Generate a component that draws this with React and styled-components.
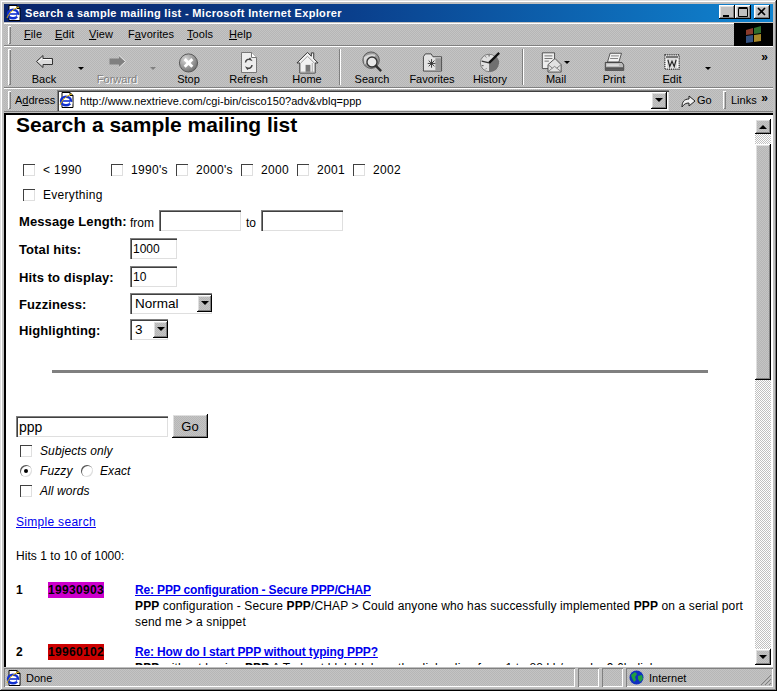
import React from 'react';
import styled, { createGlobalStyle } from 'styled-components';

const Global = createGlobalStyle`
  html, body { margin: 0; padding: 0; background: #c0c0c0; }
  * { box-sizing: border-box; }
`;

const dither = `repeating-conic-gradient(#c4c4c4 0 25%, #b6b6b6 0 50%) 0 0 / 2px 2px`;
const raised = `inset -1px -1px 0 #000, inset 1px 1px 0 #fff, inset -2px -2px 0 #808080, inset 2px 2px 0 #dfdfdf`;
const sunken = `inset 1px 1px 0 #808080, inset 2px 2px 0 #404040, inset -1px -1px 0 #dfdfdf`;

const Win = styled.div`
  width: 777px;
  height: 691px;
  padding: 4px;
  display: flex;
  flex-direction: column;
  overflow: hidden;
  background: #c0c0c0;
  box-shadow: inset -1px -1px 0 #000, inset 1px 1px 0 #dfdfdf, inset -2px -2px 0 #808080, inset 2px 2px 0 #fff;
  font-family: "Liberation Sans", Arial, sans-serif;
  font-size: 12px;
  color: #000;
`;
const TitleBar = styled.div`
  height: 18px;
  flex: none;
  display: flex;
  align-items: center;
  padding: 0 3px 0 2px;
  margin-bottom: 1px;
  background: linear-gradient(90deg, #0a246a 0%, #0a3f8c 45%, #1084d0 100%);
  color: #fff;
  font-weight: bold;
  font-size: 11px;
  letter-spacing: 0.33px;
  gap: 3px;
`;
const TitleText = styled.span`
  flex: 1;
  margin-left: 1px;
  white-space: nowrap;
`;
const WinBtn = styled.div`
  width: 16px;
  height: 14px;
  margin-top: -2px;
  margin-left: ${p => p.$gap || 0}px;
  display: flex;
  align-items: center;
  justify-content: center;
  background: #c0c0c0;
  box-shadow: ${raised};
`;
const Band = styled.div`
  flex: none;
  height: ${p => p.$h}px;
  display: flex;
  align-items: center;
  position: relative;
  font-size: 11px;
  background: ${dither};
  box-shadow: inset 0 1px 0 #fff, inset 0 -1px 0 #808080;
`;
const Grip = styled.div`
  width: 3px;
  height: ${p => p.$h}px;
  flex: none;
  margin-left: ${p => p.$ml ?? 4}px;
  margin-right: ${p => p.$mr || 0}px;
  background: #c0c0c0;
  box-shadow: inset 1px 1px 0 #fff, inset -1px -1px 0 #808080;
`;
const MenuItem = styled.span`
  width: ${p => p.$w}px;
  flex: none;
  margin-top: -2px;
  margin-left: ${p => p.$ml || 0}px;
  white-space: nowrap;
  letter-spacing: 0.1px;
  u { text-decoration: underline; }
`;
const Flag = styled.div`
  width: 39px;
  height: 23px;
  margin-left: auto;
  background: #000;
  display: flex;
  align-items: center;
  justify-content: center;
`;
const ToolBtn = styled.div`
  width: ${p => p.$w}px;
  height: 41px;
  flex: none;
  position: relative;
  display: flex;
  flex-direction: column;
  align-items: center;
  padding-top: 3px;
  svg { height: 24px; flex: none; margin-right: ${p => (p.$dd ? 10 : 0)}px; }
  span {
    margin-top: -2px;
    line-height: 14px;
    color: ${p => (p.$off ? '#808080' : '#000')};
    text-shadow: ${p => (p.$off ? '1px 1px 0 #fff' : 'none')};
  }
  ${p => p.$dd && `
    &::after {
      content: '';
      position: absolute;
      left: 33px;
      top: 14px;
      border: 3px solid transparent;
      border-bottom: 0;
      border-top: 3px solid #000;
    }
  `}
`;
const Drop = styled.div`
  width: ${p => p.$w}px;
  flex: none;
  display: flex;
  justify-content: center;
  margin-top: 2px;
  &::before {
    content: '';
    border: 3px solid transparent;
    border-bottom: 0;
    border-top: 3px solid ${p => (p.$off ? '#808080' : '#000')};
    width: 0;
    height: 0;
  }
`;
const Spacer = styled.div`
  width: ${p => p.$w}px;
  flex: none;
`;
const Sep = styled.div`
  width: 2px;
  height: 36px;
  flex: none;
  margin: 0 ${p => p.$m}px;
  background: linear-gradient(90deg, #808080 50%, #fff 50%);
`;
const Chevrons = styled.span`
  position: absolute;
  right: 5px;
  top: ${p => p.$top}px;
  font-size: 12px;
  font-weight: bold;
  line-height: 10px;
`;
const AddrLabel = styled.span`
  margin-left: 4px;
  width: 42px;
  flex: none;
`;
const AddrField = styled.div`
  width: 612px;
  height: 21px;
  flex: none;
  display: flex;
  align-items: center;
  padding: 0 2px;
  background: #fff;
  box-shadow: ${sunken};
  svg { flex: none; margin-right: 6px; }
`;
const AddrUrl = styled.span`
  flex: 1;
  padding-top: 1px;
  letter-spacing: 0.02px;
`;
const ArrowBtn = styled.div`
  width: ${p => p.$w || 16}px;
  height: ${p => p.$h || 17}px;
  flex: none;
  display: flex;
  align-items: center;
  justify-content: center;
  background: ${dither};
  box-shadow: ${raised};
  &::before {
    content: '';
    width: 0;
    height: 0;
    border: 4px solid transparent;
    border-bottom: 0;
    border-top: 4px solid #000;
    ${p => p.$up && 'transform: rotate(180deg);'}
  }
`;
const GoWrap = styled.div`
  width: 54px;
  flex: none;
  display: flex;
  align-items: center;
  padding-left: 11px;
  gap: 1px;
`;
const LinksLabel = styled.span`
  margin-left: 5px;
`;
const Frame = styled.div`
  flex: 1;
  min-height: 0;
  display: flex;
  margin-top: 1px;
  background: #fff;
  box-shadow: inset 2px 2px 0 #000, inset 1px 1px 0 #808080;
  padding: 3px 2px 2px 2px;
`;
const Page = styled.div`
  flex: 1;
  min-width: 0;
  overflow: hidden;
  padding-left: 10px;
`;
const Heading = styled.h1`
  margin: -3px 0 0;
  height: 44px;
  font-size: 21px;
  line-height: 24px;
  font-weight: bold;
`;
const CheckRow = styled.div`
  height: ${p => p.$h || 25}px;
  display: flex;
  align-items: center;
  padding-left: ${p => p.$pl ?? 7}px;
`;
const CheckItem = styled.label`
  width: ${p => p.$w || 'auto'};
  flex: none;
  display: flex;
  align-items: center;
  gap: ${p => p.$gap || 8}px;
  font-style: ${p => (p.$em ? 'italic' : 'normal')};
  letter-spacing: ${p => (p.$em ? '0.1px' : '0.3px')};
`;
const Box = styled.span`
  width: 12px;
  height: 12px;
  flex: none;
  background: #fff;
  box-shadow: inset 1px 1px 0 #404040, inset -1px -1px 0 #dfdfdf;
`;
const Radio = styled.span`
  width: 12px;
  height: 12px;
  flex: none;
  border-radius: 50%;
  background: #fff;
  display: flex;
  align-items: center;
  justify-content: center;
  box-shadow: inset 1px 1px 0 #555, inset -1px -1px 0 #dfdfdf;
  &::after {
    content: '';
    width: 4px;
    height: 4px;
    border-radius: 50%;
    background: ${p => (p.$on ? '#000' : 'transparent')};
  }
`;
const FormRow = styled.div`
  height: ${p => p.$h || 28}px;
  display: flex;
  align-items: center;
  padding-left: 3px;
  input, & > div { margin-top: -2px; }
`;
const Label = styled.b`
  width: 111px;
  flex: none;
  font-size: 13px;
  letter-spacing: 0.1px;
`;
const Unit = styled.span`
  padding-top: 3px;
`;
const Field = styled.input`
  width: ${p => p.$w}px;
  height: 21px;
  flex: none;
  margin: ${p => p.$m || 0};
  padding: 1px 2px 0 3px;
  border: 0;
  outline: 0;
  background: #fff;
  font: inherit;
  font-size: ${p => p.$fs || 12}px;
  color: #000;
  box-shadow: ${sunken};
`;
const Select = styled.div`
  width: ${p => p.$w}px;
  height: 21px;
  flex: none;
  display: flex;
  align-items: center;
  justify-content: space-between;
  padding: 0 0 0 5px;
  font-size: 13.5px;
  box-shadow: ${sunken};
`;
const Rule = styled.hr`
  width: 656px;
  height: 3px;
  margin: 27px 0 41px 36px;
  border: 0;
  background: #808080;
`;
const SearchRow = styled.div`
  height: 24px;
  display: flex;
  align-items: center;
  gap: 4px;
`;
const GoBtn = styled.button`
  width: 36px;
  height: 24px;
  padding: 0;
  border: 0;
  background: ${dither};
  box-shadow: ${raised};
  font: inherit;
  font-size: 13px;
  color: #000;
`;
const Options = styled.div`
  margin-top: 3px;
`;
const LinkA = styled.a`
  color: #0000ee;
  text-decoration: underline;
`;
const SimpleLine = styled.div`
  margin-top: 14px;
  height: 14px;
  line-height: 14px;
  letter-spacing: 0.3px;
`;
const HitsLine = styled.div`
  margin-top: 20px;
  height: 14px;
  line-height: 14px;
  letter-spacing: 0.05px;
`;
const Result = styled.div`
  display: grid;
  grid-template-columns: 32px 87px 1fr;
  margin-top: ${p => p.$mt}px;
`;
const Num = styled.b`
  line-height: 16px;
`;
const Chip = styled.b`
  width: 56px;
  height: 16px;
  text-align: center;
  line-height: 16px;
  letter-spacing: 0.3px;
  background: ${p => p.$bg};
`;
const ResLink = styled(LinkA)`
  display: block;
  font-weight: bold;
  line-height: 15px;
  padding-top: 1px;
  letter-spacing: -0.15px;
`;
const Snip = styled.div`
  line-height: 16px;
  padding-right: 3px;
  letter-spacing: 0.13px;
`;
const ScrollBar = styled.div`
  width: 16px;
  flex: none;
  margin-top: 3px;
  display: flex;
  flex-direction: column;
  background: repeating-conic-gradient(#fff 0 25%, #c0c0c0 0 50%) 0 0 / 2px 2px;
`;
const Thumb = styled.div`
  height: 236px;
  flex: none;
  margin-top: 10px;
  margin-bottom: auto;
  background: ${dither};
  box-shadow: ${raised};
`;
const Status = styled.div`
  flex: none;
  height: 19px;
  margin-top: 1px;
  display: flex;
  gap: 3px;
  font-size: 11px;
`;
const Cell = styled.div`
  width: ${p => (p.$w ? `${p.$w}px` : 'auto')};
  flex: ${p => (p.$w ? 'none' : '1')};
  display: flex;
  align-items: center;
  gap: ${p => p.$gap || 5}px;
  padding-left: ${p => p.$pl || 0}px;
  background: ${dither};
  position: relative;
  box-shadow: inset 1px 1px 0 #808080, inset -1px -1px 0 #fff;
`;
const Resize = styled.svg`
  position: absolute;
  right: 1px;
  bottom: 1px;
`;

const IeIcon = () => (
  <svg width="15" height="16" viewBox="0 0 15 16">
    <path d="M3 .5h8l3 3v12H3z" fill="#fff" stroke="#000" />
    <path d="M11 .5v3h3" fill="none" stroke="#000" />
    <ellipse cx="7" cy="9" rx="5" ry="4.2" fill="none" stroke="#1030d0" strokeWidth="2.4" />
    <path d="M3 9h8" stroke="#1030d0" strokeWidth="1.6" />
    <path d="M11 10.5l2.4 1" stroke="#fff" strokeWidth="2" />
    <path d="M1 13c2-5 6-9 12-11" fill="none" stroke="#e0b000" strokeWidth="1" />
  </svg>
);
const BackIcon = () => (
  <svg width="17" height="24" viewBox="0 0 17 24">
    <path d="M.5 11.500L7 5.500v3h9.500v6H7v3z" fill="#dcdcdc" stroke="#333" />
    <path d="M2.500 11.500l3.500-3M7 9.500h8" stroke="#fff" fill="none" />
  </svg>
);
const ForwardIcon = () => (
  <svg width="17" height="24" viewBox="0 0 17 24">
    <path d="M16.500 11.500L10 5.500v3H.5v6H10v3z" fill="#808080" />
    <path d="M10 5.500l6.500 6-6.500 6" fill="none" stroke="#e8e8e8" />
  </svg>
);
const StopIcon = () => (
  <svg width="21" height="24" viewBox="0 0 22 24">
    <defs>
      <radialGradient id="stopG" cx=".35" cy=".3" r=".8">
        <stop offset="0" stopColor="#d8d8d8" />
        <stop offset="1" stopColor="#686868" />
      </radialGradient>
    </defs>
    <circle cx="11" cy="13" r="9.500" fill="url(#stopG)" stroke="#555" />
    <path d="M7 9l8 8M15 9l-8 8" stroke="#fff" strokeWidth="3" />
  </svg>
);
const RefreshIcon = () => (
  <svg width="18" height="24" viewBox="0 0 18 24">
    <path d="M1.500 2.500h10l5 5v15h-15z" fill="#eee" stroke="#777" />
    <path d="M11.500 2.500v5h5" fill="#fff" stroke="#777" />
    <path d="M5.500 12.500a3.500 3.500 0 0 1 5-3l-1-1.500M12 15a3.500 3.500 0 0 1-5 3l1 1.500" fill="none" stroke="#444" strokeWidth="1.500" />
  </svg>
);
const HomeIcon = () => (
  <svg width="23" height="24" viewBox="0 0 24 24">
    <path d="M1 13L12 2l4 4V2.500h2.500v6L23 13h-3v10.500H4V13z" fill="#f2f2f2" stroke="#333" />
    <path d="M5 13L12 6l7 7" fill="none" stroke="#999" />
    <rect x="10" y="15" width="5" height="8.500" fill="#777" />
    <path d="M17 13v10M4 22.500h16" stroke="#aaa" />
  </svg>
);
const SearchIcon = () => (
  <svg width="22" height="24" viewBox="0 0 24 24">
    <circle cx="11" cy="10" r="9" fill="#9a9a9a" stroke="#555" />
    <path d="M3 7c4-4 10-4 13-3l-3 5c-3 3-7 3-9 6z" fill="#d8d8d8" />
    <circle cx="12" cy="12" r="5.500" fill="#e8e8e8" stroke="#333" strokeWidth="1.500" />
    <path d="M16 16l6 6" stroke="#333" strokeWidth="2.500" />
  </svg>
);
const FavIcon = () => (
  <svg width="21" height="24" viewBox="0 0 22 24">
    <path d="M1.500 6.500l2-3h6l2 3h9v15h-19z" fill="#e4e4e4" stroke="#444" />
    <rect x="14" y="8" width="6" height="13" fill="#999" />
    <path d="M10 9v9M6 13.500h8M7 10.500l6 6M13 10.500l-6 6" stroke="#333" />
  </svg>
);
const HistoryIcon = () => (
  <svg width="22" height="24" viewBox="0 0 24 24">
    <circle cx="11" cy="13" r="9.500" fill="#e0e0e0" stroke="#777" />
    <path d="M11 13L18 5.500A9.500 9.500 0 0 1 11 22.500z" fill="#707070" />
    <path d="M11 13L22 2" stroke="#111" strokeWidth="2.500" />
    <path d="M11 13L3 11" stroke="#333" strokeWidth="1.500" />
    <path d="M3 16h2M7 20l1-1M7 6l1 1M11 4v2" stroke="#444" />
  </svg>
);
const MailIcon = () => (
  <svg width="21" height="24" viewBox="0 0 24 24">
    <path d="M1.500 1.500h14v18h-14z" fill="#eee" stroke="#444" />
    <path d="M4 5h9M4 8h9M4 11h5" stroke="#666" />
    <path d="M8 15l8-7 7 7v8.500H8z" fill="#e2e2e2" stroke="#444" />
    <path d="M8 23l7.500-6 7.500 6M8 15l5 4M23 15l-5 4" fill="none" stroke="#777" />
  </svg>
);
const PrintIcon = () => (
  <svg width="21" height="24" viewBox="0 0 24 24">
    <path d="M7 2h13l-3 10H4z" fill="#f4f4f4" stroke="#444" />
    <path d="M8 5h9M7 8h9" stroke="#777" />
    <path d="M1.500 12.500h19l2 3v6h-21z" fill="#bbb" stroke="#333" />
    <rect x="2" y="18" width="20" height="3" fill="#555" />
    <path d="M3 15.500h14" stroke="#fff" />
  </svg>
);
const EditIcon = () => (
  <svg width="18" height="24" viewBox="0 -3 24 30">
    <rect x="2.500" y="2.500" width="19" height="19" fill="#fff" stroke="#222" strokeWidth="1.500" strokeDasharray="1.500 1" />
    <rect x="4" y="4" width="16" height="3" fill="#777" />
    <rect x="5" y="8" width="14" height="12" fill="#ddd" />
    <path d="M6.500 9l2.500 9 3-7 3 7 2.500-9" fill="none" stroke="#222" strokeWidth="1.500" />
  </svg>
);
const WinLogo = () => (
  <svg width="20" height="20" viewBox="0 0 20 20">
    <path d="M2 5l7-2v6l-7 1z" fill="#8a3a2c" />
    <path d="M10 3l7-2v7l-7 1z" fill="#2f6e2e" />
    <path d="M2 11l7-1v7l-7 1z" fill="#33507f" />
    <path d="M10 10l7-1v7l-7 1z" fill="#a88828" />
  </svg>
);
const GoArrow = () => (
  <svg width="16" height="16" viewBox="0 0 16 16">
    <path d="M2 15c0-5 2-8 7-8V4l6 5-6 5v-3c-3 0-5 1-7 4z" fill="#f0f0f0" stroke="#222" />
  </svg>
);
const Globe = () => (
  <svg width="15" height="15" viewBox="0 0 15 15">
    <circle cx="7.500" cy="7.500" r="7" fill="#1030c0" />
    <path d="M2 5l4-3 2 2-2 3 1 3-2 2-2-4zM9 6l4-1 1 4-3 3-2-3z" fill="#20a040" />
  </svg>
);

const TOOLS = [
  ['Back', 60, BackIcon],
  ['drop', 13],
  ['Forward', 60, ForwardIcon, true],
  ['drop', 12, null, true],
  ['Stop', 59, StopIcon],
  ['Refresh', 61, RefreshIcon],
  ['Home', 56, HomeIcon],
  ['sep', 4],
  ['Search', 54, SearchIcon],
  ['Favorites', 66, FavIcon],
  ['History', 50, HistoryIcon],
  ['sep', 7],
  ['Mail', 50, MailIcon],
  ['gap', 4],
  ['Print', 58, PrintIcon],
  ['Edit', 58, EditIcon],
  ['drop', 13],
];

const ERAS = [['< 1990', '88px'], ["1990's", '65px'], ["2000's", '65px'], ['2000', '56px'], ['2001', '56px'], ['2002', 'auto']];

export default function App() {
  return (
    <Win>
      <Global />
      <TitleBar>
        <IeIcon />
        <TitleText>Search a sample mailing list - Microsoft Internet Explorer</TitleText>
        <WinBtn>
          <svg width="10" height="10"><path d="M1 8h6v2H1z" /></svg>
        </WinBtn>
        <WinBtn $gap={-3}>
          <svg width="10" height="10"><path d="M0.500 1.500h9v8h-9zM0.500 0.500h9" fill="none" stroke="#000" /></svg>
        </WinBtn>
        <WinBtn>
          <svg width="10" height="10"><path d="M1 1l7 7M8 1l-7 7" stroke="#000" strokeWidth="1.600" /></svg>
        </WinBtn>
      </TitleBar>

      <Band $h={23}>
        <Grip $h={18} />
        <MenuItem $w={21} $ml={13}><u>F</u>ile</MenuItem>
        <MenuItem $w={34} $ml={10}><u>E</u>dit</MenuItem>
        <MenuItem $w={39}><u>V</u>iew</MenuItem>
        <MenuItem $w={59}>F<u>a</u>vorites</MenuItem>
        <MenuItem $w={42}><u>T</u>ools</MenuItem>
        <MenuItem $w={40}><u>H</u>elp</MenuItem>
        <Flag><WinLogo /></Flag>
      </Band>

      <Band $h={42}>
        <Grip $h={36} $mr={3} />
        {TOOLS.map(([name, w, Icon, off], i) => {
          if (name === 'drop') return <Drop key={i} $w={w} $off={off} />;
          if (name === 'sep') return <Sep key={i} $m={w} />;
          if (name === 'gap') return <Spacer key={i} $w={w} />;
          return (
            <ToolBtn key={i} $w={w} $off={off} $dd={name === 'Mail'}>
              <Icon />
              <span>{name}</span>
            </ToolBtn>
          );
        })}
        <Chevrons $top={6}>»</Chevrons>
      </Band>

      <Band $h={24}>
        <Grip $h={18} />
        <AddrLabel>A<u>d</u>dress</AddrLabel>
        <AddrField>
          <IeIcon />
          <AddrUrl>http://www.nextrieve.com/cgi-bin/cisco150?adv&amp;vblq=ppp</AddrUrl>
          <ArrowBtn />
        </AddrField>
        <GoWrap><GoArrow />Go</GoWrap>
        <Grip $h={18} $ml={0} />
        <LinksLabel>Links</LinksLabel>
        <Chevrons $top={5}>»</Chevrons>
      </Band>

      <Frame>
        <Page>
          <Heading>Search a sample mailing list</Heading>
          <CheckRow>
            {ERAS.map(([t, w]) => (
              <CheckItem key={t} $w={w}><Box />{t}</CheckItem>
            ))}
          </CheckRow>
          <CheckRow>
            <CheckItem><Box />Everything</CheckItem>
          </CheckRow>
          <FormRow>
            <Label>Message Length:</Label>
            <Unit>from</Unit>
            <Field $w={82} $m="0 5px 0 5px" readOnly value="" />
            <Unit>to</Unit>
            <Field $w={82} $m="0 0 0 5px" readOnly value="" />
          </FormRow>
          <FormRow><Label>Total hits:</Label><Field $w={47} readOnly value="1000" /></FormRow>
          <FormRow><Label>Hits to display:</Label><Field $w={47} readOnly value="10" /></FormRow>
          <FormRow $h={26}>
            <Label>Fuzziness:</Label>
            <Select $w={82}>Normal<ArrowBtn $w={15} $h={17} /></Select>
          </FormRow>
          <FormRow $h={26}>
            <Label>Highlighting:</Label>
            <Select $w={38}>3<ArrowBtn $w={15} $h={17} /></Select>
          </FormRow>
          <Rule />
          <SearchRow>
            <Field $w={152} $fs={14} readOnly value="ppp" />
            <GoBtn>Go</GoBtn>
          </SearchRow>
          <Options>
            <CheckRow $h={20} $pl={4}><CheckItem $em><Box />Subjects only</CheckItem></CheckRow>
            <CheckRow $h={20} $pl={4}>
              <CheckItem $em $w="61px"><Radio $on />Fuzzy</CheckItem>
              <CheckItem $em $gap={7}><Radio />Exact</CheckItem>
            </CheckRow>
            <CheckRow $h={20} $pl={4}><CheckItem $em><Box />All words</CheckItem></CheckRow>
          </Options>
          <SimpleLine><LinkA href="#">Simple search</LinkA></SimpleLine>
          <HitsLine>Hits 1 to 10 of 1000:</HitsLine>
          <Result $mt={19}>
            <Num>1</Num>
            <Chip $bg="#cc00cc">19930903</Chip>
            <div>
              <ResLink href="#">Re: PPP configuration - Secure PPP/CHAP</ResLink>
              <Snip>
                <b>PPP</b> configuration - Secure <b>PPP</b>/CHAP &gt; Could anyone who has successfully implemented <b>PPP</b> on a serial port send me &gt; a snippet
              </Snip>
            </div>
          </Result>
          <Result $mt={14}>
            <Num>2</Num>
            <Chip $bg="#cc0000">19960102</Chip>
            <div>
              <ResLink href="#">Re: How do I start PPP without typing PPP?</ResLink>
              <Snip>
                <b>PPP</b> without having <b>PPP</b> A T about blah blah on the dialup line from 1 to 88 kb/s and a 9.6k dial up
              </Snip>
            </div>
          </Result>
        </Page>
        <ScrollBar>
          <ArrowBtn $up $h={15} $w={16} />
          <Thumb />
          <ArrowBtn $h={16} $w={16} />
        </ScrollBar>
      </Frame>

      <Status>
        <Cell $pl={2}><IeIcon />Done</Cell>
        <Cell $w={21} />
        <Cell $w={21} />
        <Cell $w={147} $pl={3}>
          <Globe />Internet
          <Resize width="12" height="12" viewBox="0 0 12 12">
            <path d="M11 1L1 11M11 5L5 11M11 9L9 11" stroke="#808080" fill="none" />
          </Resize>
        </Cell>
      </Status>
    </Win>
  );
}
